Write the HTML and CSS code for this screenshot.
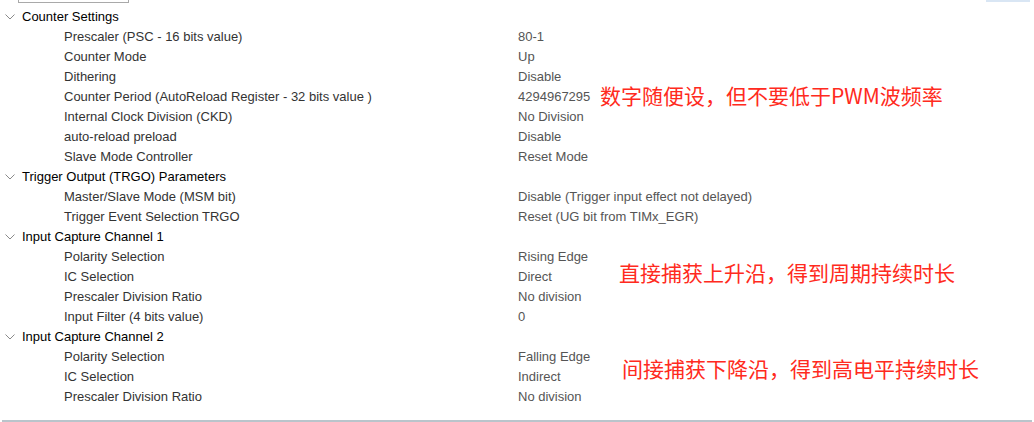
FILE: index.html
```html
<!DOCTYPE html>
<html lang="en">

<head>
    <meta charset="UTF-8">
    <title>Parameter Settings</title>
    <link rel="stylesheet" href="styles.css">
</head>

<body>
    <div class="page">
        <!-- top strip: bits of the controls above -->
        <div class="strip">
            <div class="search-box"></div>
            <div class="sel-box"></div>
        </div>

        <div class="tree">
            <!-- Counter Settings -->
            <div class="group">
                <svg class="chev" viewBox="0 0 10 6"><path d="M0.5 0.5 L5 5 L9.5 0.5" /></svg>
                Counter Settings
            </div>
            <div class="row"><span class="name">Prescaler (PSC - 16 bits value)</span><span class="val">80-1</span></div>
            <div class="row"><span class="name">Counter Mode</span><span class="val">Up</span></div>
            <div class="row"><span class="name">Dithering</span><span class="val">Disable</span></div>
            <div class="row"><span class="name">Counter Period (AutoReload Register - 32 bits value )</span><span class="val">4294967295</span></div>
            <div class="row"><span class="name">Internal Clock Division (CKD)</span><span class="val">No Division</span></div>
            <div class="row"><span class="name">auto-reload preload</span><span class="val">Disable</span></div>
            <div class="row"><span class="name">Slave Mode Controller</span><span class="val">Reset Mode</span></div>

            <!-- Trigger Output -->
            <div class="group">
                <svg class="chev" viewBox="0 0 10 6"><path d="M0.5 0.5 L5 5 L9.5 0.5" /></svg>
                Trigger Output (TRGO) Parameters
            </div>
            <div class="row"><span class="name">Master/Slave Mode (MSM bit)</span><span class="val">Disable (Trigger input effect not delayed)</span></div>
            <div class="row"><span class="name">Trigger Event Selection TRGO</span><span class="val">Reset (UG bit from TIMx_EGR)</span></div>

            <!-- Input Capture Channel 1 -->
            <div class="group">
                <svg class="chev" viewBox="0 0 10 6"><path d="M0.5 0.5 L5 5 L9.5 0.5" /></svg>
                Input Capture Channel 1
            </div>
            <div class="row"><span class="name">Polarity Selection</span><span class="val">Rising Edge</span></div>
            <div class="row"><span class="name">IC Selection</span><span class="val">Direct</span></div>
            <div class="row"><span class="name">Prescaler Division Ratio</span><span class="val">No division</span></div>
            <div class="row"><span class="name">Input Filter (4 bits value)</span><span class="val">0</span></div>

            <!-- Input Capture Channel 2 -->
            <div class="group">
                <svg class="chev" viewBox="0 0 10 6"><path d="M0.5 0.5 L5 5 L9.5 0.5" /></svg>
                Input Capture Channel 2
            </div>
            <div class="row"><span class="name">Polarity Selection</span><span class="val">Falling Edge</span></div>
            <div class="row"><span class="name">IC Selection</span><span class="val">Indirect</span></div>
            <div class="row"><span class="name">Prescaler Division Ratio</span><span class="val">No division</span></div>

            <!-- red notes written over the screenshot -->
            <div class="note note-period">数字随便设，但不要低于PWM波频率</div>
            <div class="note note-ch1">直接捕获上升沿，得到周期持续时长</div>
            <div class="note note-ch2">间接捕获下降沿，得到高电平持续时长</div>
        </div>

        <div class="bottom-bar"></div>
    </div>
</body>

</html>
```

FILE: styles.css
```css
body {
    margin: 0;
    background: #ffffff;
    font-family: "Liberation Sans", Arial, sans-serif;
    font-size: 13px;
}

.page {
    width: 1034px;
    height: 422px;
    display: flex;
    flex-direction: column;
    overflow: hidden;
}

/* Top strip */
.strip {
    height: 7px;
    position: relative;
}

.search-box {
    position: absolute;
    left: 18px;
    top: -10px;
    width: 109px;
    height: 11px;
    border: 1px solid #a9a9a9;
}

.sel-box {
    position: absolute;
    left: 986px;
    top: 0;
    width: 44px;
    height: 2px;
    background: #d9e6f4;
}

/* Tree */
.tree {
    position: relative;
    flex: 1;
}

.group,
.row {
    height: 20px;
    line-height: 20px;
    white-space: nowrap;
}

.group {
    display: flex;
    align-items: center;
    color: #000000;
}

.chev {
    width: 10px;
    height: 6px;
    margin: 0 7px 0 5px;
    fill: none;
    stroke: #8a8a8a;
    stroke-width: 1;
}

.row {
    display: grid;
    grid-template-columns: 454px 1fr;
    padding-left: 64px;
}

.name {
    color: #333333;
}

.val {
    color: #555555;
}

/* Red notes */
.note {
    position: absolute;
    font-family: "Noto Sans CJK SC", "Liberation Sans", sans-serif;
    font-size: 21px;
    line-height: 24px;
    color: #ff2a20;
    white-space: nowrap;
}

.note-period {
    left: 600px;
    top: 76px;
}

.note-ch1 {
    left: 619px;
    top: 253px;
}

.note-ch2 {
    left: 622px;
    top: 349px;
}

.bottom-bar {
    height: 2px;
    margin: 0 2px 0 2px;
    background: #b9c4cb;
}
```
